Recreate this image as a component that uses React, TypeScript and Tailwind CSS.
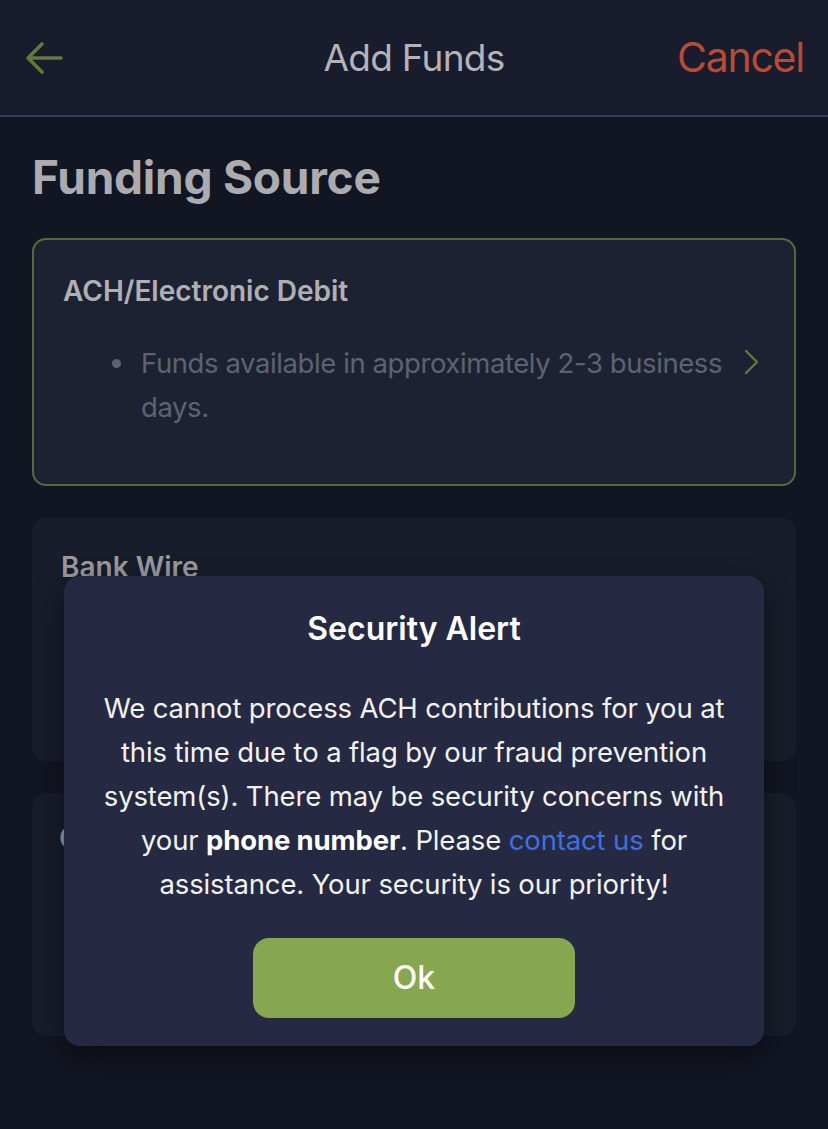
export default function App() {
  return (
    <div className="relative min-h-[1129px] w-full overflow-hidden bg-[#121623] font-['Inter','Noto_Sans',sans-serif]">
      {/* Header */}
      <div className="grid h-[115px] grid-cols-[1fr_auto_1fr] items-center bg-[#181c2c] px-[24px]">
        <div className="flex items-center">
          <svg
            xmlns="http://www.w3.org/2000/svg"
            className="h-[36px] w-[40px] text-[#5f7a3b]"
            fill="none"
            viewBox="0 0 40 36"
            stroke="currentColor"
          >
            <path strokeLinecap="round" strokeLinejoin="round" strokeWidth={3.6} d="M18 4L4 18l14 14M4 18h33" />
          </svg>
        </div>
        <h1 className="text-[37px] leading-none tracking-[-0.02em] text-[#b3b3b8]">Add Funds</h1>
        <div className="flex justify-end">
          <button className="text-[41px] leading-none tracking-[-0.03em] text-[#b84b33]">Cancel</button>
        </div>
      </div>
      <div className="h-[2px] bg-[#363c51]" />

      {/* Content */}
      <div className="px-[32px] pt-[32px]">
        <h2 className="text-[46px] font-bold leading-[56px] tracking-[-0.005em] text-[#acacb0]">Funding Source</h2>

        <div className="mt-[33px] flex flex-col gap-[32px]">
          {/* ACH card */}
          <div className="flex h-[248px] rounded-[14px] border-2 border-[#56693a] bg-[#1d2233]">
            <div className="flex-1 pl-[29px] pt-[35px]">
              <h3 className="text-[28px] font-semibold leading-[32px] text-[#b0b0b4]">ACH/Electronic Debit</h3>
              <div className="mt-[34px] flex pl-[49px]">
                <span className="mt-[18px] mr-[20px] h-[9px] w-[9px] shrink-0 rounded-full bg-[#5d6272]" />
                <p className="text-[27.5px] leading-[44px] tracking-[-0.015em] text-[#5d6272]">
                  Funds available in approximately 2-3 business
                  <br />
                  days.
                </p>
              </div>
            </div>
            <div className="flex items-center pr-[34px]">
              <svg
                xmlns="http://www.w3.org/2000/svg"
                className="h-[26px] w-[16px] text-[#5f7a3b]"
                fill="none"
                viewBox="0 0 16 26"
                stroke="currentColor"
              >
                <path strokeLinecap="round" strokeLinejoin="round" strokeWidth={2.4} d="M2 2l11 11L2 24" />
              </svg>
            </div>
          </div>

          {/* Bank Wire card */}
          <div className="h-[243px] rounded-[14px] bg-[#181d2b] pl-[29px] pt-[33px]">
            <h3 className="text-[28px] font-semibold leading-[32px] text-[#9a9a9e]">Bank Wire</h3>
          </div>

          {/* Check card */}
          <div className="h-[243px] rounded-[14px] bg-[#181d2b] pl-[27px] pt-[29px]">
            <h3 className="text-[28px] font-semibold leading-[32px] text-[#9a9a9e]">Check</h3>
          </div>
        </div>
      </div>

      {/* Security Alert modal */}
      <div className="absolute left-1/2 top-[576px] w-[700px] -translate-x-1/2 rounded-[16px] bg-[#252a42] px-[16px] pb-[28px] pt-[33px] text-center shadow-[0_10px_30px_rgba(0,0,0,0.45)]">
        <h2 className="text-[32px] font-semibold leading-[40px] text-white">Security Alert</h2>
        <p className="mt-[37px] text-[27.5px] leading-[44px] tracking-[-0.005em] text-[#f2f2f2]">
          We cannot process ACH contributions for you at
          <br />
          this time due to a flag by our fraud prevention
          <br />
          system(s). There may be security concerns with
          <br />
          your <span className="font-bold text-white">phone number</span>. Please{" "}
          <span className="text-[#3f6fe0]">contact us</span> for
          <br />
          assistance. Your security is our priority!
        </p>
        <div className="mt-[32px] flex justify-center">
          <button className="h-[80px] w-[322px] rounded-[16px] bg-[#87a650] text-[32px] font-medium text-white">
            Ok
          </button>
        </div>
      </div>
    </div>
  );
}
